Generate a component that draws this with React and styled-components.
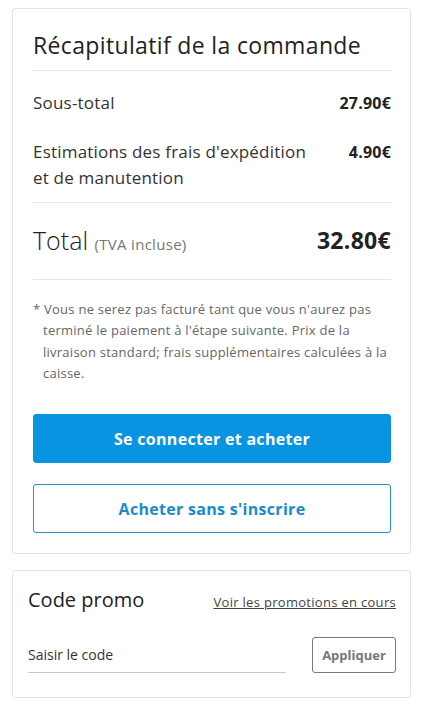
import React from 'react'
import styled, { createGlobalStyle } from 'styled-components'

const GlobalStyle = createGlobalStyle`
  body {
    margin: 0;
    background: #fff;
    font-family: "Open Sans", "Noto Sans", sans-serif;
    color: #222;
  }
`

const Page = styled.main`
  display: flex;
  flex-direction: column;
  gap: 16px;
  padding: 8px 15px 0 12px;
`

const Card = styled.section`
  background: #fff;
  border: 1px solid #e3e3e3;
  border-radius: 3px;
  padding: ${p => p.$padding || '21px 19px 20px 20px'};
`

const Title = styled.h2`
  margin: 0;
  padding: 0 0 10px;
  font-size: 23px;
  line-height: 30px;
  font-weight: 500;
  letter-spacing: 0.35px;
  color: #222;
  border-bottom: 1px solid #e6e6e6;
`

const Lines = styled.div`
  display: flex;
  flex-direction: column;
  gap: 23px;
  padding: 19px 0 11px;
  border-bottom: 1px solid #e6e6e6;
`

const Line = styled.div`
  display: flex;
  justify-content: space-between;
  align-items: flex-start;
  gap: 20px;
  font-size: 17px;
  line-height: 26px;
  letter-spacing: 0.2px;
  color: #333;
`

const Amount = styled.span`
  font-size: 16px;
  font-weight: 700;
  color: #222;
  white-space: nowrap;
`

const TotalRow = styled.div`
  display: flex;
  justify-content: space-between;
  align-items: center;
  padding: 22px 0 24px;
  border-bottom: 1px solid #e6e6e6;
`

const TotalLabel = styled.span`
  font-size: 25px;
  line-height: 30px;
  font-weight: 300;
  color: #222;
`

const Vat = styled.span`
  font-size: 15px;
  line-height: 1;
  font-weight: 400;
  letter-spacing: 0.3px;
  color: #777;
`

const TotalAmount = styled.span`
  font-size: 23px;
  line-height: 30px;
  font-weight: 700;
  letter-spacing: 0.3px;
  color: #222;
`

const Note = styled.p`
  margin: 0;
  padding: 19px 0 0 10px;
  text-indent: -10px;
  font-size: 13px;
  line-height: 21.3px;
  letter-spacing: 0.25px;
  color: #666;
`

const Actions = styled.div`
  display: flex;
  flex-direction: column;
  gap: 21px;
  margin-top: 30px;
`

const Button = styled.button`
  height: 49px;
  border-radius: 3px;
  font-family: inherit;
  font-size: 16px;
  font-weight: 700;
  letter-spacing: 0.3px;
  cursor: pointer;
  border: 1px solid ${p => (p.$outline ? '#2a8fca' : '#0994e2')};
  background: ${p => (p.$outline ? '#fff' : '#0994e2')};
  color: ${p => (p.$outline ? '#1a8bcb' : '#fff')};
`

const PromoHead = styled.div`
  display: flex;
  justify-content: space-between;
  align-items: baseline;
  line-height: 26px;
`

const PromoTitle = styled.h3`
  margin: 0;
  font-size: 20px;
  font-weight: 400;
  color: #222;
`

const PromoLink = styled.a`
  font-size: 13px;
  letter-spacing: 0.3px;
  color: #444;
  text-decoration: underline;
  cursor: pointer;
`

const PromoForm = styled.div`
  display: flex;
  align-items: flex-end;
  justify-content: space-between;
  margin-top: 22px;
`

const CodeInput = styled.input`
  width: 258px;
  border: none;
  border-bottom: 1px solid #c8c8c8;
  padding: 7px 0 8px;
  font-family: inherit;
  font-size: 14px;
  color: #333;
  outline: none;
  &::placeholder {
    color: #333;
  }
`

const ApplyButton = styled.button`
  width: 84px;
  height: 36px;
  border: 1px solid #777;
  border-radius: 3px;
  background: #fff;
  font-family: inherit;
  font-size: 13px;
  font-weight: 700;
  color: #777;
`

export default function App() {
  return (
    <>
      <GlobalStyle />
      <Page>
        <Card>
          <Title>Récapitulatif de la commande</Title>
          <Lines>
            <Line>
              <span>Sous-total</span>
              <Amount>27.90€</Amount>
            </Line>
            <Line>
              <span>Estimations des frais d'expédition<br />et de manutention</span>
              <Amount>4.90€</Amount>
            </Line>
          </Lines>
          <TotalRow>
            <TotalLabel>Total <Vat>(TVA incluse)</Vat></TotalLabel>
            <TotalAmount>32.80€</TotalAmount>
          </TotalRow>
          <Note>
            * Vous ne serez pas facturé tant que vous n'aurez pas terminé le paiement à l'étape suivante. Prix de la livraison standard; frais supplémentaires calculées à la caisse.
          </Note>
          <Actions>
            <Button>Se connecter et acheter</Button>
            <Button $outline>Acheter sans s'inscrire</Button>
          </Actions>
        </Card>
        <Card $padding="16px 14px 24px 15px">
          <PromoHead>
            <PromoTitle>Code promo</PromoTitle>
            <PromoLink>Voir les promotions en cours</PromoLink>
          </PromoHead>
          <PromoForm>
            <CodeInput placeholder="Saisir le code" />
            <ApplyButton>Appliquer</ApplyButton>
          </PromoForm>
        </Card>
      </Page>
    </>
  )
}
